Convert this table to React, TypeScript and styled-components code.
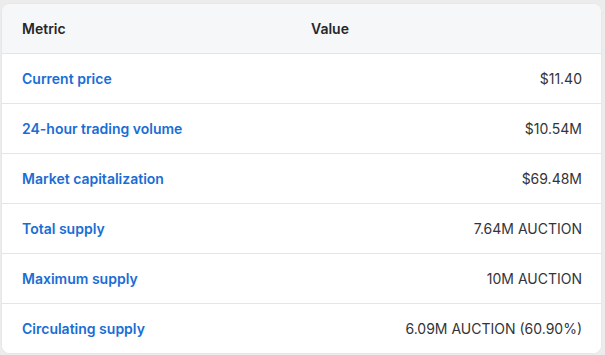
import styled, { createGlobalStyle } from "styled-components";

const GlobalStyle = createGlobalStyle`
  html, body {
    margin: 0;
    padding: 0;
    background: #ececec;
  }
  body {
    font-family: Inter, "Noto Sans", "Liberation Sans", sans-serif;
    -webkit-font-smoothing: antialiased;
  }
`;

const Page = styled.div`
  padding: 4px 4px 3px 2px;
`;

const Card = styled.div`
  width: 599px;
  background: #ffffff;
  border-radius: 8px;
  overflow: hidden;
  box-shadow: 0 0 0 0.5px rgba(0, 0, 0, 0.04);
`;

const Row = styled.div<{ $head?: boolean }>`
  display: grid;
  grid-template-columns: 289px 1fr;
  align-items: center;
  height: 49px;
  padding: 0 19px 0 20px;
  background: ${({ $head }) => ($head ? "#f6f7f8" : "#ffffff")};
  border-bottom: 1px solid #e4e5e7;
  font-size: 14px;

  &:last-child {
    border-bottom: none;
  }
`;

const HeadCell = styled.div`
  font-weight: 600;
  color: #26272a;
`;

const MetricLink = styled.a`
  font-weight: 600;
  color: #1a6dd4;
  text-decoration: none;
  cursor: pointer;
`;

const ValueCell = styled.div`
  text-align: right;
  font-weight: 400;
  color: #333438;
`;

const metrics: { label: string; value: string }[] = [
  { label: "Current price", value: "$11.40" },
  { label: "24-hour trading volume", value: "$10.54M" },
  { label: "Market capitalization", value: "$69.48M" },
  { label: "Total supply", value: "7.64M AUCTION" },
  { label: "Maximum supply", value: "10M AUCTION" },
  { label: "Circulating supply", value: "6.09M AUCTION (60.90%)" },
];

export default function App() {
  return (
    <>
      <GlobalStyle />
      <Page>
        <Card>
          <Row $head>
            <HeadCell>Metric</HeadCell>
            <HeadCell>Value</HeadCell>
          </Row>
          {metrics.map((m) => (
            <Row key={m.label}>
              <div>
                <MetricLink>{m.label}</MetricLink>
              </div>
              <ValueCell>{m.value}</ValueCell>
            </Row>
          ))}
        </Card>
      </Page>
    </>
  );
}
